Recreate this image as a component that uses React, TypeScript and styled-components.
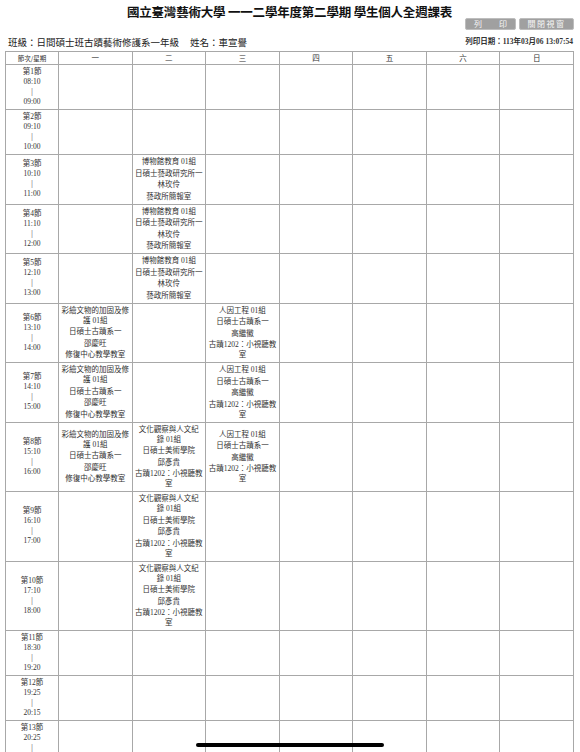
import React from "react";
import styled, { createGlobalStyle } from "styled-components";

const GlobalStyle = createGlobalStyle`
  html, body {
    margin: 0;
    padding: 0;
    background: #ffffff;
  }
  body {
    font-family: "Liberation Serif", "Noto Sans CJK TC", serif;
    color: #222;
  }
`;

const Page = styled.div`
  width: 580px;
  box-sizing: border-box;
  padding: 0 6px 0 5px;
  display: flex;
  flex-direction: column;
`;

const Title = styled.h1`
  margin: 0;
  padding-top: 5px;
  font-family: "Noto Sans CJK TC", "Noto Sans", sans-serif;
  font-size: 12.5px;
  line-height: 14px;
  font-weight: 700;
  letter-spacing: -0.2px;
  text-align: center;
  color: #111;
`;

const ButtonBar = styled.div`
  display: flex;
  justify-content: flex-end;
  gap: 3px;
  margin-top: -1px;
  padding-right: 0;
`;

const ActionButton = styled.button<{ $wide?: boolean }>`
  height: 12px;
  width: ${(p) => (p.$wide ? "55px" : "51px")};
  padding: 0;
  border: 1px solid #bdbdbd;
  border-radius: 2px;
  background: #a0a0a0;
  color: #f6f6f6;
  font-family: "Noto Sans CJK TC", sans-serif;
  font-size: 8px;
  line-height: 10px;
  letter-spacing: ${(p) => (p.$wide ? "1.5px" : "0")};
  display: flex;
  align-items: center;
  justify-content: center;
  gap: 17px;
`;

const InfoRow = styled.div`
  display: flex;
  justify-content: space-between;
  align-items: flex-end;
  height: 20px;
  padding: 0 1px 2px 3px;
  box-sizing: border-box;
`;

const ClassInfo = styled.div`
  font-family: "Noto Sans CJK TC", sans-serif;
  font-size: 9.5px;
  line-height: 12px;
  color: #222;
  display: flex;
  gap: 11px;
`;

const PrintDate = styled.div`
  font-family: "Liberation Serif", "Noto Sans CJK TC", serif;
  font-size: 7.5px;
  line-height: 10px;
  font-weight: 700;
  color: #333;
  margin-bottom: 1px;
`;

const Schedule = styled.table`
  width: 569px;
  table-layout: fixed;
  border-collapse: collapse;
  border: 1px solid #8c8c8c;
  margin-top: 1px;
  color: #333;
`;

const HeadCell = styled.th<{ $small?: boolean }>`
  height: 12px;
  padding: 0;
  border: 1px solid #a8a8a8;
  font-family: "Noto Sans CJK TC", sans-serif;
  font-weight: 400;
  font-size: ${(p) => (p.$small ? "6.5px" : "7.5px")};
  line-height: 12px;
  text-align: center;
  color: #333;
`;

const PeriodCell = styled.td`
  padding: 2px 1px;
  border: 1px solid #a8a8a8;
  font-size: 7.5px;
  line-height: 10px;
  text-align: center;
  vertical-align: middle;
  color: #333;
`;

const CourseCell = styled.td`
  padding: 2px 1px;
  border: 1px solid #a8a8a8;
  font-size: 7.5px;
  line-height: 10px;
  text-align: center;
  vertical-align: middle;
  color: #333;
`;

const CourseLine = styled.div`
  & + & {
    margin-top: 1.5px;
  }
`;

const HomeIndicator = styled.div`
  position: fixed;
  left: 50%;
  bottom: 5px;
  width: 188px;
  height: 4px;
  margin-left: -94px;
  border-radius: 3px;
  background: #000;
`;

type Course = string[];

const museum: Course = ["博物館教育 01組", "日碩士藝政研究所一", "林玫伶", "藝政所簡報室"];
const painted: Course = ["彩繪文物的加固及修護\u00a001組", "日碩士古蹟系一", "邵慶旺", "修復中心教學教室"];
const ergonomics: Course = ["人因工程 01組", "日碩士古蹟系一", "高繼徽", "古蹟1202：小視聽教室"];
const culture: Course = ["文化觀察與人文紀錄\u00a001組", "日碩士美術學院", "邱彥貴", "古蹟1202：小視聽教室"];

const periods: { start: string; end: string; courses: Record<number, Course> }[] = [
  { start: "08:10", end: "09:00", courses: {} },
  { start: "09:10", end: "10:00", courses: {} },
  { start: "10:10", end: "11:00", courses: { 1: museum } },
  { start: "11:10", end: "12:00", courses: { 1: museum } },
  { start: "12:10", end: "13:00", courses: { 1: museum } },
  { start: "13:10", end: "14:00", courses: { 0: painted, 2: ergonomics } },
  { start: "14:10", end: "15:00", courses: { 0: painted, 2: ergonomics } },
  { start: "15:10", end: "16:00", courses: { 0: painted, 1: culture, 2: ergonomics } },
  { start: "16:10", end: "17:00", courses: { 1: culture } },
  { start: "17:10", end: "18:00", courses: { 1: culture } },
  { start: "18:30", end: "19:20", courses: {} },
  { start: "19:25", end: "20:15", courses: {} },
  { start: "20:25", end: "21:15", courses: {} },
  { start: "21:20", end: "22:10", courses: {} },
];

const days = ["一", "二", "三", "四", "五", "六", "日"];

export default function App() {
  return (
    <>
      <GlobalStyle />
      <Page>
        <Title>國立臺灣藝術大學 一一二學年度第二學期 學生個人全週課表</Title>
        <ButtonBar>
          <ActionButton>
            <span>列</span>
            <span>印</span>
          </ActionButton>
          <ActionButton $wide>關閉視窗</ActionButton>
        </ButtonBar>
        <InfoRow>
          <ClassInfo>
            <span>班級：日間碩士班古蹟藝術修護系一年級</span>
            <span>姓名：車宣譽</span>
          </ClassInfo>
          <PrintDate>列印日期：113年03月06 13:07:54</PrintDate>
        </InfoRow>
        <Schedule>
          <colgroup>
            <col style={{ width: 53 }} />
            {days.map((d) => (
              <col key={d} />
            ))}
          </colgroup>
          <thead>
            <tr>
              <HeadCell $small>節次/星期</HeadCell>
              {days.map((d) => (
                <HeadCell key={d}>{d}</HeadCell>
              ))}
            </tr>
          </thead>
          <tbody>
            {periods.map((p, i) => (
              <tr key={p.start}>
                <PeriodCell>
                  第{i + 1}節
                  <br />
                  {p.start}
                  <br />|
                  <br />
                  {p.end}
                </PeriodCell>
                {days.map((d, di) => (
                  <CourseCell key={d}>
                    {p.courses[di]?.map((line) => (
                      <CourseLine key={line}>{line}</CourseLine>
                    ))}
                  </CourseCell>
                ))}
              </tr>
            ))}
          </tbody>
        </Schedule>
      </Page>
      <HomeIndicator />
    </>
  );
}
